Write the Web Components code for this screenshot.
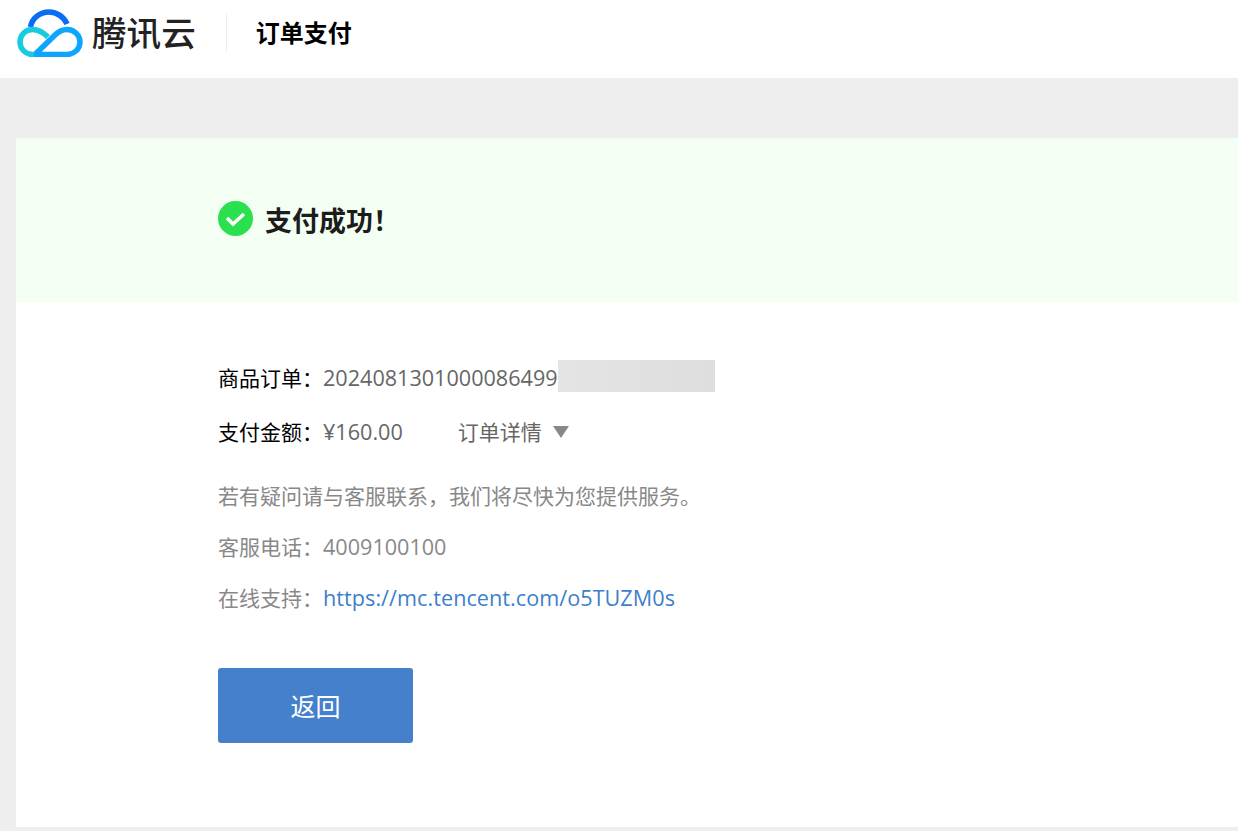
<!DOCTYPE html>
<html lang="zh">
<head>
<meta charset="utf-8">
<title>订单支付</title>
<style>
  html, body { margin: 0; padding: 0; }
  body {
    background: #eee;
    height: 831px;
    overflow: hidden;
    font-family: "Noto Sans CJK SC", sans-serif;
  }
</style>
</head>
<body>
<pay-header title-text="订单支付"></pay-header>
<pay-card>
  <pay-banner slot="banner">支付成功！</pay-banner>
  <pay-row label="商品订单：" blurred>2024081301000086499</pay-row>
  <pay-row label="支付金额：" detail="订单详情">¥160.00</pay-row>
  <pay-note class="first">若有疑问请与客服联系，我们将尽快为您提供服务。</pay-note>
  <pay-note value="4009100100">客服电话：</pay-note>
  <pay-note href="https://mc.tencent.com/o5TUZM0s">在线支持：</pay-note>
  <pay-button>返回</pay-button>
</pay-card>

<script>
// latin text in the reference runs a bit wider than the CJK size
const LATIN = 'font-family: "Open Sans", sans-serif; font-size: 21.6px;';

// top bar with logo and page title
class PayHeader extends HTMLElement {
  connectedCallback() {
    this.attachShadow({ mode: 'open' });
    this.shadowRoot.innerHTML = `
      <style>
        :host { display: flex; align-items: center; height: 78px; background: #fff; padding: 0 0 12px 17px; box-sizing: border-box; }
        svg { width: 66px; height: 48px; display: block; }
        .word { margin-left: 9px; font-size: 34.6px; font-weight: 500; line-height: 40px; color: #222; position: relative; top: -2px; }
        .line { width: 1px; height: 38px; background: #eee; margin: 0 29px 0 30px; }
        .title { font-size: 24px; font-weight: 700; color: #000; position: relative; top: -2px; }
      </style>
      <svg viewBox="0 0 66 48" fill="none" stroke-width="5.5">
        <path d="M13.5 18C15 9 23 3 32 3C40 3 47 8 50 15" stroke="#0b6cf5"/>
        <path d="M31 28C27 24 21 20.5 15.5 20.5C8.5 20.5 3 26 3 33C3 40 8.5 45.5 15.5 45.5H24" stroke="#17cbe0"/>
        <path d="M17 45.5H50C57 45.5 63 40 63 33C63 26 57 20.5 50 20.5C45 20.5 42 22 38 26L19 44.5" stroke="#0ea5ff"/>
      </svg>
      <span class="word">腾讯云</span>
      <span class="line"></span>
      <span class="title">${this.getAttribute('title-text')}</span>`;
  }
}

class PayCard extends HTMLElement {
  connectedCallback() {
    this.attachShadow({ mode: 'open' });
    this.shadowRoot.innerHTML = `
      <style>
        :host { display: block; margin: 60px 0 0 16px; background: #fff; height: 689px; }
        .body { padding: 48px 0 0 202px; }
      </style>
      <slot name="banner"></slot>
      <div class="body"><slot></slot></div>`;
  }
}

class PayBanner extends HTMLElement {
  connectedCallback() {
    this.attachShadow({ mode: 'open' });
    this.shadowRoot.innerHTML = `
      <style>
        :host { display: flex; align-items: center; height: 164px; background: #f3fff2; padding: 0 0 3px 202px; box-sizing: border-box; }
        svg { width: 35px; height: 35px; margin-right: 12px; }
        span { font-size: 27px; font-weight: 700; color: #1c1c1c; position: relative; top: 1px; }
      </style>
      <svg viewBox="0 0 35 35">
        <circle cx="17.5" cy="17.5" r="17.5" fill="#2ae04f"/>
        <path d="M9 17L15 23L26 13" fill="none" stroke="#fff" stroke-width="3.5"/>
      </svg>
      <span><slot></slot></span>`;
  }
}

// order rows: black label, grey value
class PayRow extends HTMLElement {
  connectedCallback() {
    const detail = this.getAttribute('detail');
    this.attachShadow({ mode: 'open' });
    this.shadowRoot.innerHTML = `
      <style>
        :host { display: flex; align-items: center; height: 54px; font-size: 21px; color: #666; position: relative; }
        .label { color: #000; }
        .value { ${LATIN} }
        .blur { position: absolute; left: 340px; top: 10px; height: 32px; width: 157px; background: linear-gradient(90deg, #e4e4e4, #dedede); }
        .detail { margin-left: 55px; }
        .arrow { width: 0; height: 0; margin: 2px 0 0 11px; border: 8px solid transparent; border-top: 12px solid #888; border-bottom: 0; }
      </style>
      <span class="label">${this.getAttribute('label')}</span>
      <span class="value"><slot></slot></span>
      ${this.hasAttribute('blurred') ? '<span class="blur"></span>' : ''}
      ${detail ? `<span class="detail">${detail}</span><span class="arrow"></span>` : ''}`;
  }
}

class PayNote extends HTMLElement {
  connectedCallback() {
    const href = this.getAttribute('href');
    const value = this.getAttribute('value');
    this.attachShadow({ mode: 'open' });
    this.shadowRoot.innerHTML = `
      <style>
        :host { display: block; font-size: 21px; line-height: 50.5px; color: #888; }
        :host(.first) { margin-top: 12px; }
        a { color: #3d7fc9; text-decoration: none; letter-spacing: .05px; }
        a, .latin { ${LATIN} }
      </style>
      <slot></slot>${value ? `<span class="latin">${value}</span>` : ''}${href ? `<a href="${href}">${href}</a>` : ''}`;
  }
}

class PayButton extends HTMLElement {
  connectedCallback() {
    this.attachShadow({ mode: 'open' });
    this.shadowRoot.innerHTML = `
      <style>
        :host { display: flex; align-items: center; justify-content: center; width: 195px; height: 75px; margin-top: 44px; background: #4580cc; border-radius: 3px; color: #fff; font-size: 25px; }
      </style>
      <slot></slot>`;
  }
}

customElements.define('pay-header', PayHeader);
customElements.define('pay-card', PayCard);
customElements.define('pay-banner', PayBanner);
customElements.define('pay-row', PayRow);
customElements.define('pay-note', PayNote);
customElements.define('pay-button', PayButton);
</script>
</body>
</html>
